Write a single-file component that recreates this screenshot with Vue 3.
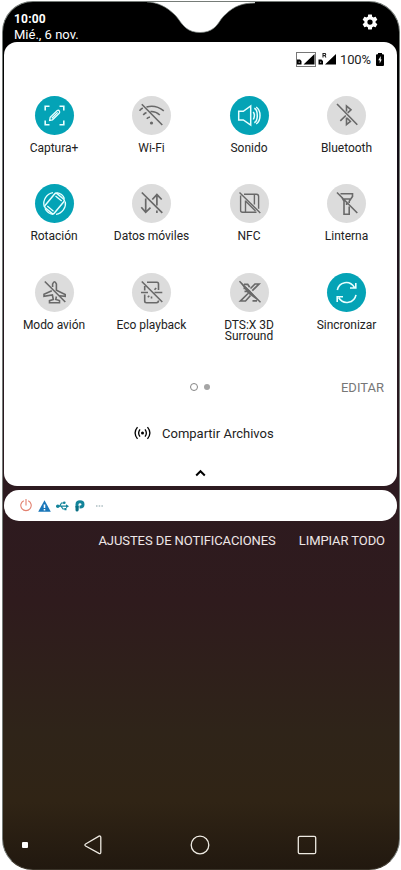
<script setup>
const tiles = [
  { id: 'capture', label: 'Captura+', on: true },
  { id: 'wifi', label: 'Wi-Fi' },
  { id: 'sound', label: 'Sonido', on: true },
  { id: 'bluetooth', label: 'Bluetooth' },
  { id: 'rotate', label: 'Rotación', on: true },
  { id: 'data', label: 'Datos móviles' },
  { id: 'nfc', label: 'NFC' },
  { id: 'torch', label: 'Linterna' },
  { id: 'plane', label: 'Modo avión' },
  { id: 'eco', label: 'Eco playback' },
  { id: 'dts', label: 'DTS:X 3D Surround' },
  { id: 'sync', label: 'Sincronizar', on: true },
]
</script>

<template>
  <main class="phone">
    <svg class="notch" viewBox="0 0 120 33" aria-hidden="true">
      <path d="M7 0V1C17 1 27 6 35 14C39 18 41 23 46 27C53 33 67 33 74 27C79 23 80 18 86 13C94 5 103 2 115 2V0Z" fill="#fff" />
      <path d="M7 1C17 1 27 6 35 14C39 18 41 23 46 27C53 33 67 33 74 27C79 23 80 18 86 13C94 5 103 2 115 2" fill="none" stroke="#77807b" stroke-width=".7" />
    </svg>

    <header class="top">
      <div>
        <div class="time">10:00</div>
        <div class="date">Mié., 6 nov.</div>
      </div>
      <svg class="gear" width="18" height="18" viewBox="0 0 24 24">
        <path fill="#fff" d="M19.43 12.98c.04-.32.07-.64.07-.98s-.03-.66-.07-.98l2.11-1.65c.19-.15.24-.42.12-.64l-2-3.46c-.12-.22-.39-.3-.61-.22l-2.49 1c-.52-.4-1.08-.73-1.69-.98l-.38-2.65C14.46 2.18 14.25 2 14 2h-4c-.25 0-.46.18-.49.42l-.38 2.65c-.61.25-1.17.59-1.69.98l-2.49-1c-.23-.09-.49 0-.61.22l-2 3.46c-.13.22-.07.49.12.64l2.11 1.65c-.04.32-.07.65-.07.98s.03.66.07.98l-2.11 1.65c-.19.15-.24.42-.12.64l2 3.46c.12.22.39.3.61.22l2.49-1c.52.4 1.08.73 1.69.98l.38 2.65c.03.24.24.42.49.42h4c.25 0 .46-.18.49-.42l.38-2.65c.61-.25 1.17-.59 1.69-.98l2.49 1c.23.09.49 0 .61-.22l2-3.46c.12-.22.07-.49-.12-.64zM12 15.5A3.5 3.5 0 1 1 12 8.500a3.500 3.500 0 0 1 0 7z" />
      </svg>
    </header>

    <section class="panel">
      <div class="status">
        <svg width="41" height="16" viewBox="0 0 41 16">
          <rect x=".5" y="1.500" width="19" height="14" fill="none" stroke="#777" />
          <path d="M7.500 13.500L18.500 3V13.500ZM29 13.500L40 3V13.500Z" />
          <path d="M1 8.500H4L5.500 10V13.500H1ZM22.500 8.500H25.500L27 10V13.500H22.500Z" />
          <path d="M2.700 10.500H3.700V12H2.700ZM24.200 10.500H25.200V12H24.200Z" fill="#aaa" />
          <path d="M27 6.500V2.500H29.200Q30.200 3.500 29.200 4.500H27M28.700 4.500L30 6.500" fill="none" stroke="#222" stroke-width="1.100" />
        </svg>
        <span>100%</span>
        <svg width="8" height="13" viewBox="0 0 8 13">
          <path d="M2 1.300V0H6V1.300H7Q8 1.300 8 2.300V12Q8 13 7 13H1Q0 13 0 12V2.300Q0 1.300 1 1.300Z" />
          <path d="M4.700 3L2.300 7.300H3.700V10.500L5.700 6.500H4.700Z" fill="#fff" />
        </svg>
      </div>

      <div class="grid">
        <div v-for="t in tiles" :key="t.id" class="tile">
          <div class="disc" :class="{ on: t.on }">
            <svg width="39" height="39" viewBox="0 0 39 39" class="glyph">
              <g v-if="t.id === 'capture'">
                <path d="M10.200 14.500V10.200H14.500M24.500 10.200H28.800V14.500M28.800 24.500V28.800H24.500M14.500 28.800H10.200V24.500" stroke-width="1.600" />
                <path d="M14.600 24.500L15.200 21.200L22.200 14.500Q23.700 13.800 24.500 15.300Q25 16.300 24.200 17.200L17.500 23.800ZM16.800 22.200L22.700 16.400" />
              </g>
              <g v-else-if="t.id === 'wifi'">
                <path d="M7.500 14.800Q9 13 10.800 12M14.500 11Q23.500 8.300 31.800 14.800M11.200 19Q12.600 17.300 14.500 16.500M18.500 15.500Q23.500 15 27.800 19M14.800 22.800Q16 21.300 18 21M9.800 8.300L30.300 29" stroke-width="1.600" />
                <circle cx="19.500" cy="27" r="1.600" class="solid" />
              </g>
              <g v-else-if="t.id === 'sound'" stroke-width="1.500">
                <path d="M8.700 15.300H13.300L20.700 10V29L13.300 23.900H8.700ZM23.300 15.800Q25.500 19.500 23.300 23.500M24.300 12.300C28.300 14 28.300 25 24.300 26.700M26.200 11C31.300 14.500 31.300 24.500 26.200 28" />
              </g>
              <g v-else-if="t.id === 'bluetooth'">
                <path d="M10 8L30.300 28.800M19.500 15.500V10L24 13.800L20.700 16.800M18.800 19.500L13.300 24.800M19.500 21.500V28.600L23.400 25.400L20 22" stroke-width="1.600" />
              </g>
              <g v-else-if="t.id === 'rotate'">
                <rect x="13.500" y="10.300" width="12" height="18.400" rx="1.600" transform="rotate(40 19.500 19.500)" stroke-width="1.500" />
                <path d="M20.500 12L26.700 17.100M12.300 22L18.500 27.200M18 8.700A11 11 0 0 0 9.200 22.500M21.500 8.700Q27.500 9.500 29.500 14.800M30.300 17.500A11 11 0 0 1 21 30.300M10 24.500Q12.500 29.700 18 30.300" />
              </g>
              <g v-else-if="t.id === 'data'">
                <path d="M9.800 8.500L30.300 28.800M13.700 14.500V27.700M9.300 23.200L13.700 28.300L18.500 23.700M24.900 11V21.500M20.300 15.500L24.900 10.600L29.700 15.500M24.900 26.500V29" stroke-width="1.700" />
              </g>
              <g v-else-if="t.id === 'nfc'">
                <path d="M9.500 8.500L30.300 29M14 10.200H26.500Q28.600 10.200 28.600 12.500V24.800M10.600 11.500V26.500Q10.600 28.200 12.500 28.200H26.500M15.500 16.500V28M24.400 10.500V20.500M15.500 17L25.500 27" stroke-width="1.400" />
              </g>
              <g v-else-if="t.id === 'torch'">
                <path d="M10 8.500L30.300 29M13.500 9.700H25.500V12.500L22.200 17.200V19M15 13.500L17 17.200V30.300H22.200V22.500M17 15H24M19.600 17.500V21" stroke-width="1.600" />
              </g>
              <g v-else-if="t.id === 'plane'">
                <path d="M9.800 8.500L30.300 29M17.600 14V11Q19.500 6.500 21.400 11V17.300L30.200 21.500V23.400L24.500 22.700M16.800 17.800L9 21.300V23.400L17.400 22L18.300 26.500L14.500 27.700V29.800H24.500V27.500L20.800 26.500L21.400 23.500" stroke-width="1.600" />
              </g>
              <g v-else-if="t.id === 'eco'">
                <path d="M9.800 8.500L30.300 29M9 19.500H16M22.500 19.500H30.300M15 9.200H25Q26.500 9.200 26.500 11V17M12.700 13V17.500M12.700 21.500V28Q12.700 29.700 14.500 29.700H24.500Q26.500 29.700 26.500 27.500M24.200 15L22.500 16.800M15.800 24.200L17.300 22.700M19.500 23.500V25.500" stroke-width="1.600" />
              </g>
              <g v-else-if="t.id === 'dts'">
                <path d="M9.500 8.300L30.500 29.200" stroke-width="1.500" />
                <path d="M14 11.300H17.700L19.700 14.200M20.500 15.500L25 11H29L22.300 17.700M18 20.500L10.500 28H15.500L20.500 22.500M13.500 15.300H16.500M14.500 18.300H19M22.500 27.800H27" stroke-width="1.700" />
                <path d="M9 8L20 17.500L30.500 29.500L18 20.500Z" class="solid" />
              </g>
              <g v-else>
                <path d="M10.300 17C12 8.800 22.500 6.500 27.500 14.500M28.800 10V15H23M29 21.800C27.300 30.200 16.500 32.300 11.700 24.800M10.200 29V23.800H16" stroke-width="1.600" />
              </g>
            </svg>
          </div>
          <div class="label">{{ t.label }}</div>
        </div>
      </div>

      <div class="pager">
        <span class="dots"><i class="current"></i><i></i></span>
        <span class="edit">EDITAR</span>
      </div>

      <div class="share">
        <svg width="17" height="14" viewBox="0 0 17 14">
          <circle cx="8.500" cy="7" r="1.500" />
          <path d="M6 3.300Q3.300 7 6 10.700M11 3.300Q13.700 7 11 10.700M3.500 1.200Q-1.300 7 3.500 12.800M13.500 1.200Q18.300 7 13.500 12.800" fill="none" stroke="#000" stroke-width="1.300" />
        </svg>
        <span>Compartir Archivos</span>
      </div>

      <svg class="chevron" width="11" height="8" viewBox="0 0 11 8">
        <path d="M1.200 6.500L5.500 2.200L9.800 6.500" fill="none" stroke="#000" stroke-width="2" />
      </svg>
    </section>

    <section class="notices">
      <svg width="12" height="13" viewBox="0 0 12 13">
        <path d="M6 0V6.500M3.800 1.700A5.200 5.200 0 1 0 8.200 1.700" fill="none" stroke="#e2806f" stroke-width="1.100" />
      </svg>
      <svg width="13" height="12" viewBox="0 0 13 12">
        <path d="M6.500 .3L12.800 11.700H.2Z" fill="#1976b9" />
        <path d="M5.700 4.500H7.300V8H5.700ZM5.700 9H7.300V10.500H5.700Z" fill="#fff" />
      </svg>
      <svg width="13" height="10" viewBox="0 0 13 10">
        <path d="M1.500 5.200H11M3.500 5.200L5.500 2H8M5 5.200L7 8H9" fill="none" stroke="#13849a" stroke-width="1.200" />
        <circle cx="1.800" cy="5.200" r="1.800" fill="#13849a" />
        <path d="M10 3.200L13 5.200L10 7.200ZM8.500 7H10.500V9.200H8.500Z" fill="#13849a" />
        <circle cx="8.300" cy="1.800" r="1.300" fill="#13849a" />
      </svg>
      <svg width="10" height="12" viewBox="0 0 10 12">
        <path d="M2 7.500V4.500Q2 1.700 5 1.700Q8 1.700 8 4.400Q8 7 5.200 7H4.500" fill="none" stroke="#13849a" stroke-width="3" />
        <path d="M.5 6H3.700V10Q3.300 11.500 2 11.500Q.5 11.500 .5 10Z" fill="#087084" />
      </svg>
      <svg class="more" width="7" height="2" viewBox="0 0 7 2">
        <path d="M0 .5H1.500V1.500H0ZM2.700 .5H4.200V1.500H2.700ZM5.400 .5H6.900V1.500H5.400Z" fill="#849da4" />
      </svg>
    </section>

    <div class="actions">
      <span class="settings">AJUSTES DE NOTIFICACIONES</span>
      <span class="clear">LIMPIAR TODO</span>
    </div>

    <nav class="nav">
      <i class="pin"></i>
      <svg width="18" height="20" viewBox="0 0 18 20">
        <path d="M1.600 9L15 1.200Q16.800 .5 16.800 2.500V17.300Q16.800 19.200 15 18.400L1.600 11Q.2 10 1.600 9Z" />
      </svg>
      <svg width="20" height="20" viewBox="0 0 20 20"><circle cx="10" cy="10" r="8.800" /></svg>
      <svg width="20" height="20" viewBox="0 0 20 20"><rect x="1.300" y="1.300" width="17.400" height="17.400" rx="1.500" /></svg>
    </nav>
  </main>
</template>

<style>
body { background: #fff; }
</style>

<style scoped>
.phone {
  box-sizing: border-box;
  position: relative;
  display: flex;
  flex-direction: column;
  width: 398px;
  height: 869px;
  margin: 1px 1px 0 1.500px;
  padding: 0 1.500px;
  overflow: hidden;
  border: 1px solid #767c78;
  border-bottom-color: #3b3429;
  border-radius: 31px;
  background: linear-gradient(#000 0, #000 60px, #110b14 150px, #20141c 270px, #2d1a20 470px, #2f1b1d 600px, #2f2419 730px, #302415 800px, #21180f 869px);
  font-family: Roboto, "Liberation Sans", sans-serif;
  color: #222;
}
.phone > * { flex-shrink: 0; }
.notch { position: absolute; top: -1px; left: 137.500px; width: 120px; height: 33px; }
.top {
  box-sizing: border-box;
  display: flex;
  justify-content: space-between;
  height: 40px;
  padding: 10px 18px 0 10px;
  color: #fff;
}
.time { height: 15px; font-size: 12px; line-height: 15px; font-weight: 700; letter-spacing: .2px; }
.date { font-size: 13px; line-height: 16px; white-space: nowrap; }
.gear { margin-top: 1px; }
.panel {
  display: flex;
  flex-direction: column;
  box-sizing: border-box;
  height: 444px;
  border-radius: 13px;
  background: #fff;
}
.panel > * { flex-shrink: 0; }
.status {
  display: flex;
  align-items: center;
  justify-content: flex-end;
  gap: 3px;
  height: 16px;
  margin-top: 9px;
  padding-right: 13px;
  font-size: 13px;
  letter-spacing: -.1px;
}
.status svg:last-child { margin-left: 2px; }
.grid {
  display: grid;
  grid-template-columns: repeat(4, 97.500px);
  grid-auto-rows: 88.500px;
  margin: 28.500px 0 0 1.250px;
}
.tile { display: flex; flex-direction: column; align-items: center; }
.disc { width: 39px; height: 39px; flex: none; border-radius: 50%; background: #dcdcdc; color: #696969; }
.disc.on { background: #04a3b6; color: #e8ffff; }
.glyph { display: block; fill: none; stroke: currentColor; stroke-width: 1.300; }
.solid { fill: currentColor; stroke: none; }
.label { max-width: 80px; margin-top: 8px; font-size: 12px; line-height: 11px; text-align: center; letter-spacing: -.03px; }
.pager { display: grid; grid-template-columns: 1fr auto 1fr; align-items: center; height: 20px; margin-top: 16px; }
.dots { grid-column: 2; display: flex; align-items: center; gap: 6px; padding-right: 2px; }
.dots i { width: 6px; height: 6px; border-radius: 50%; background: #a5a5a5; }
.dots .current { width: 6px; height: 6px; border: 1.500px solid #858585; background: #fff; }
.edit { justify-self: end; padding-right: 13px; font-size: 13px; color: #777; }
.share { display: flex; align-items: center; gap: 11px; height: 20px; margin: 26px 0 0 130px; font-size: 13px; }
.chevron { margin: 26px 0 0 191px; }
.notices {
  box-sizing: border-box;
  display: flex;
  align-items: center;
  gap: 5.500px;
  height: 31px;
  margin-top: 4px;
  padding-left: 16px;
  border-radius: 15px;
  background: #fff;
}
.more { margin-left: 6px; }
.actions { display: flex; justify-content: flex-end; gap: 23px; height: 20px; margin-top: 10px; padding-right: 12px; font-size: 13px; line-height: 20px; color: #eee7e7; white-space: nowrap; letter-spacing: -.08px; }
.nav { display: flex; align-items: center; height: 20px; margin-top: auto; padding: 0 0 14px 18px; }
.nav svg { fill: none; stroke: #eeeae2; stroke-width: 1.300; }
.pin { width: 6px; height: 6px; margin-right: 56px; border-radius: 1px; background: #fff; }
.nav svg:nth-of-type(2) { margin-left: 87.500px; }
.nav svg:nth-of-type(3) { margin-left: 87px; }
</style>
